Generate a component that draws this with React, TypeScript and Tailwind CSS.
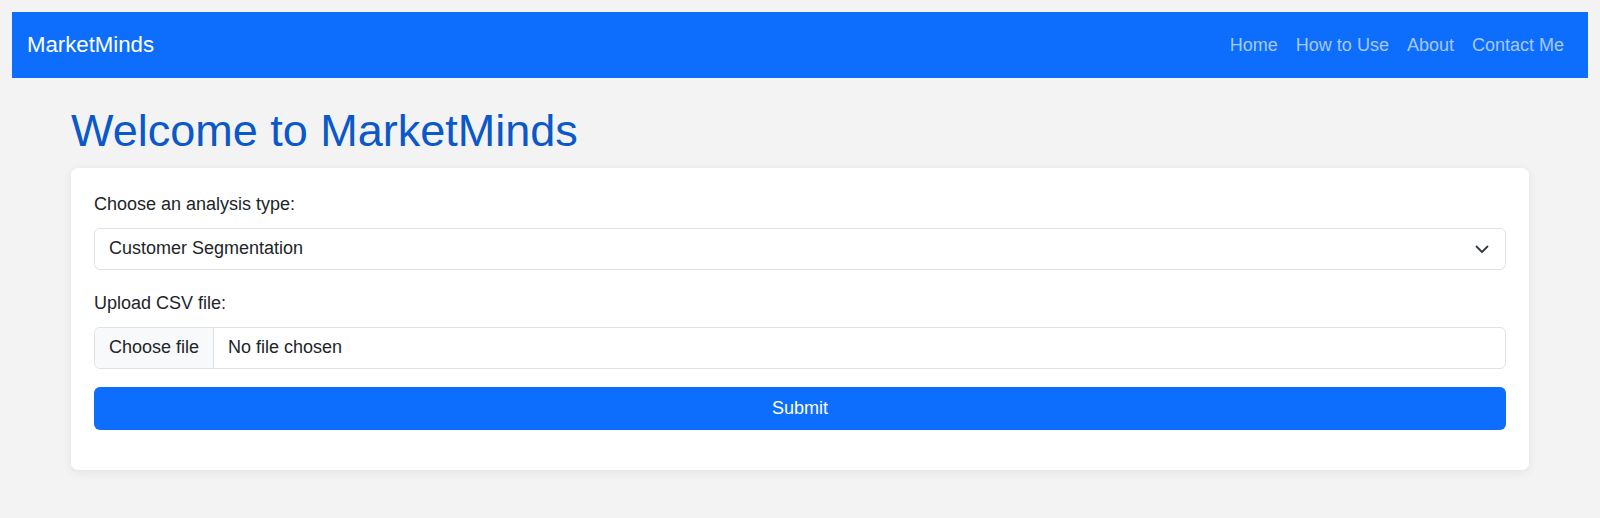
import React from "react";

export default function App() {
  const font = { fontFamily: '"Liberation Sans", Arial, Helvetica, sans-serif' };
  return (
    <div className="min-h-screen bg-[#f3f3f3] px-[12px] pt-[12px] text-[#212529]" style={font}>
      <nav className="flex h-[66px] items-center justify-between bg-[#0d6efd] px-[15px]">
        <a className="text-[22.2px] leading-none text-white">MarketMinds</a>
        <ul className="flex items-center">
          {["Home", "How to Use", "About", "Contact Me"].map((l) => (
            <li key={l} className="px-[9px] text-[18px] leading-none text-[#a9c9fe]">
              {l}
            </li>
          ))}
        </ul>
      </nav>
      <div className="mx-auto w-[1458px]">
        <h1 className="mt-[27px] mb-[10px] text-[45px] leading-[52.8px] text-[#0a58ca]">
          Welcome to MarketMinds
        </h1>
        <div className="rounded-[7px] bg-white px-[23px] pt-[23px] pb-[40px] shadow-[0_2px_10px_rgba(0,0,0,0.07)]">
          <label className="mb-[10.6px] block text-[18px] leading-[26.4px]">Choose an analysis type:</label>
          <div className="relative mb-[20px] flex h-[42px] items-center rounded-[6px] border border-[#dee2e6] bg-white pl-[14px] text-[18px]">
            <span>Customer Segmentation</span>
            <svg
              className="absolute right-[16px] top-1/2 -translate-y-1/2"
              width="14"
              height="10"
              viewBox="0 0 14 10"
              fill="none"
            >
              <path d="M1.5 2.5l5.5 5.5 5.5-5.5" stroke="#343a40" strokeWidth="1.8" strokeLinecap="round" strokeLinejoin="round" />
            </svg>
          </div>
          <label className="mb-[10.6px] block text-[18px] leading-[26.4px]">Upload CSV file:</label>
          <div className="mb-[18px] flex h-[42px] items-stretch overflow-hidden rounded-[6px] border border-[#dee2e6] bg-white text-[18px]">
            <div className="flex items-center border-r border-[#dee2e6] bg-[#f8f9fa] px-[14px]">Choose file</div>
            <div className="flex items-center pl-[14px]">No file chosen</div>
          </div>
          <button className="flex h-[43px] w-full items-center justify-center rounded-[6px] bg-[#0d6efd] text-[18px] text-white">
            Submit
          </button>
        </div>
      </div>
    </div>
  );
}
